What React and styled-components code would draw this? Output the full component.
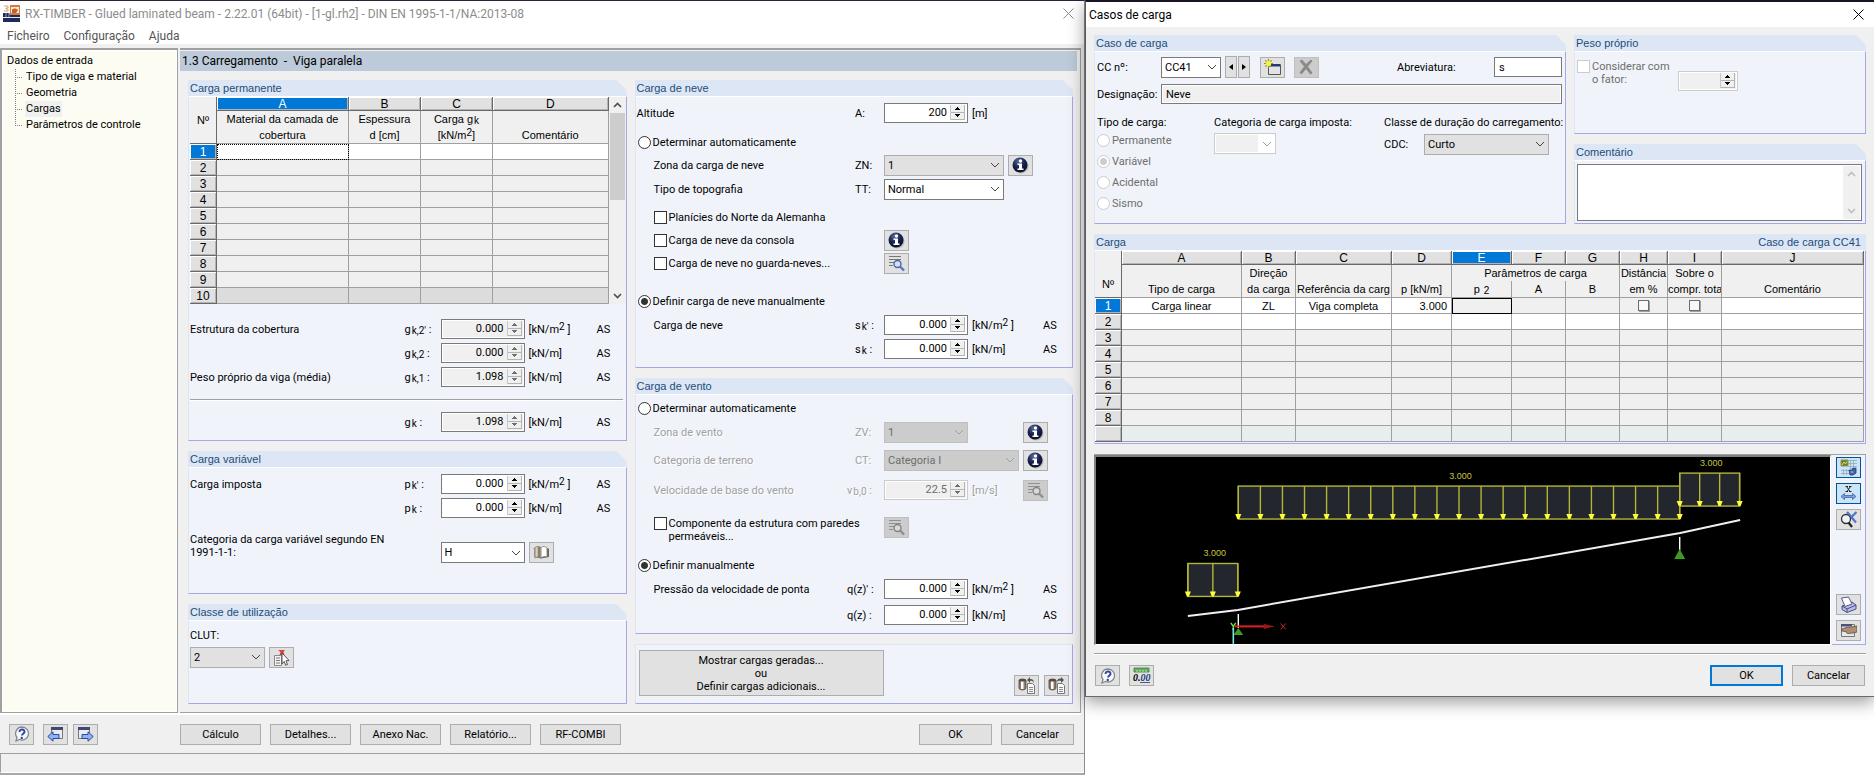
import React from 'react';
import styled, { createGlobalStyle, css } from 'styled-components';

const colors = {
  face: '#f0f0f0',
  button: '#e1e1e1',
  buttonBorder: '#adadad',
  field: '#7a7a7a',
  line: '#a0a0a0',
  group: '#f0f4fa',
  groupHead: '#dce6f4',
  groupEdge: '#a6a6ea',
  groupText: '#1c4d7a',
  accent: '#0078d7',
};

const uiFont = "Roboto, 'Liberation Sans', sans-serif";
const gridFont = "'Liberation Sans', Arial, sans-serif";

const GlobalStyle = createGlobalStyle`
  *, *::before, *::after {
    box-sizing: border-box;
  }
  body {
    margin: 0;
    background: #fff;
    font-family: ${uiFont};
    font-size: 11px;
    line-height: 13px;
    color: #000;
  }
  button, input, select, textarea {
    font: inherit;
    color: inherit;
    margin: 0;
    padding: 0;
    border-radius: 0;
    outline: none;
  }
`;

// LAYOUT
const Desktop = styled.main`
  display: grid;
  grid-template-columns: 1085fr 789fr;
  align-items: start;
  min-height: 100vh;
`;

const MainWindow = styled.section`
  display: flex;
  flex-direction: column;
  min-height: 100vh;
  background: ${colors.face};
  border-top: 1px solid #2c2238;
  border-right: 1px solid #8c8c8c;
  border-bottom: 2px solid #a8a8a8;
`;

const Dialog = styled.section`
  position: relative;
  display: flex;
  flex-direction: column;
  background: ${colors.face};
  border-top: 2px solid #1a1426;
  border-left: 1px solid #5a5a5a;
  border-bottom: 1px solid #6a6a6a;
  box-shadow: 0 5px 16px rgba(0, 0, 0, 0.4);
`;

const TitleBar = styled.header`
  display: flex;
  align-items: center;
  gap: 5px;
  height: 25px;
  padding: 0 10px 0 3px;
  background: #fff;
  color: ${({ $active }) => ($active ? '#000' : '#8c8c8c')};
`;

const Title = styled.h1`
  flex: 1;
  margin: 0;
  font-size: 12px;
  font-weight: 400;
  line-height: 16px;
`;

const CloseButton = styled.button`
  display: flex;
  border: none;
  background: none;
`;

const MenuBar = styled.nav`
  display: flex;
  gap: 14px;
  height: 18px;
  padding-left: 7px;
  background: #fff;
  font-size: 12px;
  line-height: 20px;
`;

const MenuLink = styled.a`
  height: 18px;
  color: #555;
  text-decoration: none;
`;

const Workspace = styled.div`
  flex: 1;
  display: grid;
  grid-template-columns: 178px minmax(0, 1fr);
  gap: 2px;
  margin: 4px 3px 0 0;
  border-bottom: 2px solid #fff;
`;

const TreePane = styled.aside`
  padding: 3px 5px;
  background: #fcfcf2;
  border: 1px solid ${colors.line};
  border-top-width: 2px;
  border-left-width: 2px;
  box-shadow: inset 0 0 0 1px #fff;
`;

const TreeRoot = styled.div`
  line-height: 16px;
`;

const TreeList = styled.ul`
  list-style: none;
  margin: 0 0 0 8px;
  padding: 0;
`;

const TreeItem = styled.li`
  display: flex;
  align-items: center;
  height: 16px;
  background:
    repeating-linear-gradient(180deg, #808080 0 1px, transparent 1px 2px) 0 0 / 1px
      ${({ $last }) => ($last ? '8px' : '16px')} no-repeat,
    repeating-linear-gradient(90deg, #808080 0 1px, transparent 1px 2px) 0 8px / 8px 1px no-repeat;
`;

const TreeLink = styled.a`
  margin-left: 10px;
  padding: 0 1px;
  line-height: 16px;
  color: #000;
  text-decoration: none;
  background: ${({ $current }) => ($current ? colors.face : 'transparent')};
`;

const Content = styled.div`
  display: flex;
  flex-direction: column;
  border-top: 2px solid ${colors.line};
  border-right: 1px solid ${colors.line};
  border-bottom: 1px solid ${colors.line};
`;

const ContentTitle = styled.h2`
  margin: 1px 3px 0 0;
  padding-left: 2px;
  height: 20px;
  background: #bccad9;
  font-size: 12px;
  font-weight: 400;
  line-height: 20px;
  white-space: pre;
`;

const Columns = styled.div`
  flex: 1;
  display: grid;
  grid-template-columns: minmax(0, 1fr) minmax(0, 1fr);
  gap: 8px;
  padding: 9px 7px 8px 8px;
`;

const Column = styled.div`
  display: flex;
  flex-direction: column;
  gap: 10px;
`;

// GROUP BOX
const GroupWrapper = styled.section`
  display: flex;
  flex-direction: column;
  flex: ${({ $grow }) => ($grow ? '1 0 auto' : 'none')};
  min-width: 0;
`;

const GroupHead = styled.h3`
  display: flex;
  justify-content: space-between;
  margin: 0;
  padding: 0 5px 0 2px;
  height: 16px;
  background: ${colors.groupHead};
  color: ${colors.groupText};
  font-family: ${gridFont};
  font-size: 11px;
  font-weight: 400;
  line-height: 16px;
  clip-path: ${({ $square }) =>
    $square ? 'none' : 'polygon(0 0, calc(100% - 10px) 0, 100% 10px, 100% 100%, 0 100%)'};
`;

const GroupBody = styled.div`
  flex: 1;
  padding: ${({ $pad }) => $pad || '0 0 7px 1px'};
  background: ${colors.group};
  border: 1px solid ${colors.groupEdge};
  border-top-color: ${({ $plain }) => ($plain ? colors.groupHead : '#fff')};
  border-left-color: ${colors.groupHead};
`;

const Group = ({ title, aside, square, grow, pad, children }) => (
  <GroupWrapper $grow={grow}>
    {title && (
      <GroupHead $square={square}>
        <span>{title}</span>
        {aside && <span>{aside}</span>}
      </GroupHead>
    )}
    <GroupBody $pad={pad} $plain={!title}>
      {children}
    </GroupBody>
  </GroupWrapper>
);

// FORM PARTS
const Row = styled.div`
  display: grid;
  grid-template-columns: ${({ $wide }) =>
    $wide ? 'minmax(0, 1fr) 37px 84px 75px 29px' : 'minmax(0, 1fr) 36px 84px 72px 29px'};
  align-items: ${({ $align = 'center' }) => $align};
  min-height: ${({ $tall }) => ($tall ? 30 : 22)}px;
  margin-top: ${({ $top = 2 }) => $top}px;
`;

const Line = styled.div`
  display: flex;
  align-items: center;
  gap: ${({ $gap = 0 }) => $gap}px;
  min-height: 22px;
  margin-top: ${({ $top = 2 }) => $top}px;
`;

const disabledText = css`
  color: #a0a0a0;
  text-shadow: 1px 1px #fff;
`;

const Label = styled.label`
  padding-left: ${({ $indent }) => ($indent ? 17 : 0)}px;
  align-self: ${({ $start }) => ($start ? 'start' : 'center')};
  ${({ $off }) => $off && disabledText}
`;

const Symbol = styled.label`
  padding-left: ${({ $shift }) => ($shift ? 8 : 0)}px;
  white-space: nowrap;
  ${({ $off }) => $off && disabledText}
`;

const Sub = styled.span`
  position: relative;
  top: 1px;
  padding-left: 1px;
  font-size: 10px;
  line-height: 0;
`;

const Sup = styled.span`
  position: relative;
  top: -3px;
  font-size: 10px;
  line-height: 0;
`;

const Unit = styled.span`
  padding-left: 4px;
  ${({ $off }) => $off && disabledText}
`;

const FixedUnit = styled(Unit)`
  flex: none;
  width: 55px;
`;

const Separator = styled.hr`
  margin: 11px 3px 10px 0;
  border: none;
  border-top: 1px solid ${colors.line};
  border-bottom: 1px solid #fff;
`;

const SpinWrapper = styled.span`
  display: flex;
  flex: none;
  gap: 3px;
  width: ${({ $width = 84 }) => $width}px;
  height: 20px;
  padding: 1px 2px 2px;
  background: ${({ $look }) => ($look === 'edit' ? '#fff' : colors.face)};
  border: 1px solid ${({ $look }) => ($look === 'off' ? '#cccccc' : colors.field)};
  box-shadow: inset 0 0 0 1px #fff;
  color: ${({ $look }) => ($look === 'off' ? '#6d6d6d' : '#000')};
`;

const SpinInput = styled.input`
  flex: 1;
  min-width: 0;
  border: none;
  background: none;
  text-align: right;
`;

const SpinButtons = styled.span`
  display: grid;
  grid-template-rows: 1fr 1fr;
  width: 15px;
  background: ${colors.face};
  border-right: 1px solid #b4b4b4;
  border-left: 1px solid #c8c8c8;
`;

const SpinButton = styled.button`
  display: flex;
  align-items: center;
  justify-content: center;
  border: none;
  border-bottom: 1px solid #b4b4b4;
  background: ${colors.face};
`;

const Spin = ({ id, value, look = 'edit', width, label }) => {
  const arrow = look === 'read' || (look === 'off' && value) ? '#6d6d6d' : '#000';
  return (
    <SpinWrapper $look={look} $width={width}>
      <SpinInput id={id} defaultValue={value} disabled={look !== 'edit'} aria-label={label} />
      <SpinButtons>
        <SpinButton type='button' aria-label='Aumentar'>
          <svg width='5' height='3' viewBox='0 0 5 3' shapeRendering='crispEdges'>
            <path d='M2 0h1v1h1v1h1v1H0V2h1V1h1z' fill={arrow} />
          </svg>
        </SpinButton>
        <SpinButton type='button' aria-label='Diminuir'>
          <svg width='5' height='3' viewBox='0 0 5 3' shapeRendering='crispEdges'>
            <path d='M0 0h5v1H4v1H3v1H2V2H1V1H0z' fill={arrow} />
          </svg>
        </SpinButton>
      </SpinButtons>
    </SpinWrapper>
  );
};

const selectLooks = {
  edit: css`
    background: #fff;
    border-color: ${colors.field};
  `,
  list: css`
    background: ${colors.button};
    border-color: ${colors.buttonBorder};
  `,
  off: css`
    background: #cccccc;
    border-color: #bfbfbf;
    color: #6d6d6d;
  `,
  empty: css`
    background: linear-gradient(${colors.face}, ${colors.face}) 1px 1px / 42px 17px no-repeat #fff;
    border-color: #cccccc;
  `,
};

const SelectWrapper = styled.span`
  display: grid;
  flex: none;
  grid-template-areas: 'stack';
  align-items: center;
  width: ${({ $width = 84 }) => $width}px;

  > * {
    grid-area: stack;
  }
  svg {
    justify-self: end;
    margin-right: 4px;
    pointer-events: none;
  }
`;

const NativeSelect = styled.select`
  width: 100%;
  height: 21px;
  padding-left: 3px;
  border: 1px solid;
  appearance: none;
  opacity: 1;
  ${({ $look }) => selectLooks[$look]}
`;

const Select = ({ id, value, look = 'edit', width }) => (
  <SelectWrapper $width={width}>
    <NativeSelect id={id} $look={look} disabled={look === 'off' || look === 'empty'}>
      <option>{value}</option>
    </NativeSelect>
    <svg width='10' height='6' viewBox='0 0 10 6'>
      <path
        d='M1 1l4 4 4-4'
        fill='none'
        stroke={look === 'off' || look === 'empty' ? '#a0a0a0' : '#444'}
      />
    </svg>
  </SelectWrapper>
);

const TextInput = styled.input`
  flex: ${({ $width }) => ($width ? 'none' : 1)};
  width: ${({ $width }) => ($width ? `${$width}px` : 'auto')};
  height: 20px;
  padding-left: 4px;
  border: 1px solid ${colors.field};
  background: ${({ readOnly }) => (readOnly ? colors.face : '#fff')};
  box-shadow: inset 0 0 0 1px #fff;
`;

const ChoiceLabel = styled.label`
  display: flex;
  align-items: ${({ $start }) => ($start ? 'flex-start' : 'center')};
  gap: 2px;
  padding-left: 1px;
  color: ${({ $off }) => ($off ? '#6d6d6d' : '#000')};
`;

// spans the label and symbol columns of a row
const OptionLabel = styled(ChoiceLabel)`
  grid-column: span 2;
  padding: 0 16px 0 17px;
`;

const Radio = styled.input.attrs({ type: 'radio' })`
  appearance: none;
  flex: none;
  width: 13px;
  height: 13px;
  border: 1px solid #333;
  border-radius: 50%;
  background: #fff;

  &:checked {
    background: radial-gradient(circle, #333 3px, #fff 4px);
  }
  &:disabled {
    border-color: #cccccc;
  }
  &:disabled:checked {
    background: radial-gradient(circle, #cccccc 3px, #fff 4px);
  }
`;

const Check = styled.input.attrs({ type: 'checkbox' })`
  appearance: none;
  flex: none;
  width: 13px;
  height: 13px;
  border: 1px solid #333;
  background: #fff;

  &:disabled {
    border-color: #cccccc;
  }
`;

const CellCheck = styled.input.attrs({ type: 'checkbox' })`
  appearance: none;
  display: block;
  width: 11px;
  height: 11px;
  margin: 0 auto;
  border: 1px solid #6d6d6d;
  background: #f8f8f8;
  box-shadow: 1px 1px #a0a0a0;
`;

const Button = styled.button`
  width: ${({ $width = 81 }) => $width}px;
  height: 21px;
  border: 1px solid ${colors.buttonBorder};
  background: ${colors.button};

  ${({ $primary }) =>
    $primary &&
    css`
      border: 2px solid ${colors.accent};
    `}
`;

const IconButton = styled.button`
  display: flex;
  flex: none;
  align-items: center;
  justify-content: center;
  width: 25px;
  height: 21px;
  border: 1px solid ${colors.buttonBorder};
  background: ${colors.button};

  ${({ $on }) =>
    $on &&
    css`
      border-color: #005499;
      background: #cce4f7;
    `}
  ${({ disabled }) =>
    disabled &&
    css`
      border-color: #bfbfbf;
      background: #cccccc;
      filter: grayscale(1);

      svg {
        opacity: 0.7;
      }
    `}
`;

const StepButton = styled(IconButton)`
  width: 12px;
  height: 22px;
`;

const GeneratedButton = styled.button`
  width: 245px;
  height: 46px;
  border: 1px solid ${colors.buttonBorder};
  background: ${colors.button};
  white-space: pre-line;
`;

// GRIDS
const Table = styled.table`
  flex: 1;
  width: 100%;
  min-width: 0;
  table-layout: fixed;
  border-collapse: separate;
  border-spacing: 0;
  background: ${colors.face};
  font-family: ${gridFont};
  line-height: 14px;
  white-space: nowrap;

  tr {
    height: 16px;
  }
`;

const LetterRow = styled.tr`
  && {
    height: 14px;
  }
`;

const raised = css`
  padding: 0;
  border-right: 1px solid #696969;
  border-bottom: 1px solid #696969;
  box-shadow: inset 1px 1px #fff, inset -1px -1px #b4b4b4;
  font-size: 12px;
  font-weight: 400;
  text-align: center;
  background: ${({ $on }) => ($on ? colors.accent : colors.button)};
  color: ${({ $on }) => ($on ? '#fff' : '#000')};
`;

const LetterCell = styled.th`
  ${raised}
  line-height: 12px;
`;

const RowCell = styled.th`
  ${raised}
`;

const CornerCell = styled.th`
  padding: ${({ $low }) => ($low ? '19px' : '0')} 0 0;
  font-weight: 400;
  border-right: 1px solid #696969;
  border-bottom: 1px solid #696969;
`;

const HeadCell = styled.th`
  padding: 0;
  overflow: hidden;
  border-right: 1px solid ${colors.line};
  border-bottom: ${({ $span }) => ($span ? '0' : '1px')} solid ${colors.line};
  font-weight: 400;
  line-height: 16px;
  vertical-align: bottom;
  white-space: pre;
`;

const cellFill = {
  edit: '#fff',
  idle: colors.face,
  end: '#dcdcdc',
  tail: '#e8eeee',
};

const Cell = styled.td`
  padding: 0 4px;
  overflow: hidden;
  border-right: 1px solid ${colors.line};
  border-bottom: 1px solid ${colors.line};
  background: ${({ $fill = 'idle' }) => cellFill[$fill]};
  text-align: ${({ $align = 'center' }) => $align};
  outline: ${({ $focus }) => $focus || 'none'};
  outline-offset: -1px;
`;

const GridWithScroll = styled.div`
  display: flex;
`;

const ScrollBar = styled.div`
  display: flex;
  flex-direction: column;
  flex: none;
  width: 17px;
  background: ${colors.face};
`;

const ScrollButton = styled.button`
  display: flex;
  align-items: center;
  justify-content: center;
  height: 16px;
  border: none;
  background: none;
`;

const ScrollTrack = styled.div`
  flex: 1;
`;

const ScrollThumb = styled.div`
  height: 87px;
  margin: 0 1px;
  background: #cdcdcd;
`;

const Scroll = ({ thumb, stroke = '#505050' }) => (
  <ScrollBar>
    <ScrollButton type='button' aria-label='Subir'>
      <svg width='9' height='6' viewBox='0 0 9 6'>
        <path d='M1 5l3.5-3.5L8 5' fill='none' stroke={stroke} strokeWidth='1.7' />
      </svg>
    </ScrollButton>
    <ScrollTrack>{thumb && <ScrollThumb />}</ScrollTrack>
    <ScrollButton type='button' aria-label='Descer'>
      <svg width='9' height='6' viewBox='0 0 9 6'>
        <path d='M1 1l3.5 3.5L8 1' fill='none' stroke={stroke} strokeWidth='1.7' />
      </svg>
    </ScrollButton>
  </ScrollBar>
);

// FOOTERS
const Footer = styled.footer`
  display: flex;
  align-items: center;
  gap: 9px;
  height: 38px;
  padding: 0 10px 0 9px;
`;

const IconPair = styled.div`
  display: flex;
  gap: 5px;
`;

const MainActions = styled.div`
  display: flex;
  flex: 1;
  gap: 9px;
  margin-left: 73px;
`;

const StatusBar = styled.div`
  height: 20px;
  border-top: 1px solid ${colors.line};
  border-left: 1px solid ${colors.line};
  border-bottom: 1px solid #fff;
`;

const DialogFooter = styled.footer`
  display: flex;
  align-items: center;
  gap: 9px;
  height: 43px;
  margin: 8px 8px 0;
  padding: 1px 1px 0;
  border-top: 1px solid ${colors.line};
  box-shadow: inset 0 1px #fff;
`;

const DialogActions = styled.div`
  display: flex;
  flex: 1;
  justify-content: flex-end;
  gap: 9px;
`;

const Generated = styled.div`
  display: flex;
  align-items: flex-end;
  gap: 5px;
`;

const Push = styled.span`
  flex: 1;
`;

// DIALOG PARTS
const DialogBody = styled.div`
  display: flex;
  flex-direction: column;
  gap: 10px;
  padding: 8px 8px 0;
`;

const TopGroups = styled.div`
  display: grid;
  grid-template-columns: minmax(0, 472fr) minmax(0, 292fr);
  gap: 8px;
`;

const FixedLabel = styled.label`
  flex: none;
  width: ${({ $width }) => $width}px;
`;

const StepPair = styled.div`
  display: flex;
  gap: 1px;
  margin: 0 10px 0 4px;
`;

const CaseOptions = styled.div`
  display: grid;
  grid-template-columns: 117px minmax(0, 1fr) 178px;
  margin-top: 11px;
`;

const OptionColumn = styled.fieldset`
  display: flex;
  flex-direction: column;
  align-items: flex-start;
  min-width: 0;
  margin: 0;
  padding: 0;
  border: none;
`;

const Legend = styled.div`
  margin-bottom: 4px;
  white-space: nowrap;
`;

const RadioStack = styled.div`
  display: flex;
  flex-direction: column;
  gap: 8px;
  margin: 1px 0 2px -1px;
`;

const WeightLine = styled.div`
  display: flex;
  align-items: flex-end;
  padding: 8px 0 35px;
`;

const WeightCheck = styled(ChoiceLabel)`
  width: 102px;
  margin-bottom: 5px;
`;

const CommentBox = styled.div`
  display: flex;
  height: 57px;
  margin: 3px 2px 2px 0;
  padding: 1px;
  border: 1px solid ${colors.field};
  background: #fff;
`;

const CommentArea = styled.textarea`
  flex: 1;
  border: none;
  resize: none;
`;

const Viewer = styled.div`
  display: flex;
  border-top: 1px solid ${colors.line};
`;

const Canvas = styled.div`
  flex: 1;
  min-width: 0;
  height: 190px;
  margin-right: 1px;
  border: 2px solid #808080;
  border-right: 1px solid #fff;
  border-bottom: 1px solid #fff;
  background: #000;

  svg {
    display: block;
    width: 100%;
    height: 100%;
  }
`;

const ViewerTools = styled.div`
  display: flex;
  flex-direction: column;
  gap: 5px;
  width: 34px;
  padding: 2px 3px 3px 4px;
  background: ${colors.group};
  border-right: 1px solid ${colors.groupEdge};
  border-bottom: 1px solid ${colors.groupEdge};
`;

// ICONS
const AppIcon = () => (
  <svg width='17' height='17' viewBox='0 0 17 17'>
    <rect x='7' y='0' width='10' height='10' fill='#d9793a' />
    <rect x='8' y='2' width='8' height='6' fill='#fbe9d8' />
    <path d='M9 5c1-2 4-2 6 0l-2 3H9z' fill='#c0602a' />
    <path d='M1 1h4v2H3v1h2v2H1' fill='none' stroke='#e0a060' />
    <path d='M0 17V8h6l1 2h10v7z' fill='#1f2a5c' />
    <path d='M0 12.5h17' stroke='#e7e7ee' />
    <path d='M3 8v4M6 8v4' stroke='#8f9ac0' />
  </svg>
);

const CloseIcon = ({ color }) => (
  <svg width='11' height='11' viewBox='0 0 11 11'>
    <path d='M.5.5l10 10M10.5.5l-10 10' stroke={color} fill='none' />
  </svg>
);

const InfoIcon = () => (
  <svg width='17' height='17' viewBox='0 0 17 17'>
    <defs>
      <radialGradient id='info' cx='.4' cy='.25' r='.8'>
        <stop offset='0' stopColor='#5a6a9c' />
        <stop offset='.5' stopColor='#18234f' />
        <stop offset='1' stopColor='#070d28' />
      </radialGradient>
    </defs>
    <circle cx='9' cy='9' r='7.5' fill='#9a9a9a' opacity='.6' />
    <circle cx='8' cy='8' r='7.5' fill='url(#info)' />
    <circle cx='8.5' cy='4' r='1.7' fill='#fff' />
    <path d='M5.5 6.5H10v5h1.5V13h-6v-1.5H7V8H5.5z' fill='#fff' />
  </svg>
);

const DetailIcon = () => (
  <svg width='17' height='17' viewBox='0 0 17 17'>
    <path d='M1 1.5h12M1 4.5h12M1 7.5h6M1 10.5h4' stroke='#777' />
    <circle cx='9.5' cy='9' r='3.5' fill='#d4e0f8' stroke='#4b68a8' strokeWidth='1.4' />
    <path d='M12 11.5l4 4' stroke='#5676bb' strokeWidth='2.4' />
  </svg>
);

const BookIcon = () => (
  <svg width='17' height='14' viewBox='0 0 17 14'>
    <path d='M0 3l1.5-1v9L8 12.5 16 11V3l-1.5-1' fill='#6a6a6a' />
    <path d='M2 1.5c2-1.500 4-1 6 0V12c-2-1-4-1.500-6 0z' fill='#d9cfbc' stroke='#777' strokeWidth='.8' />
    <path d='M8 2c1-2 4-2 6 0v9c-2-1-4-.5-6 1z' fill='#fff' stroke='#777' strokeWidth='.8' />
    <path d='M6 1v10.5' stroke='#8c7f6a' strokeWidth='2.5' />
  </svg>
);

const PickIcon = () => (
  <svg width='17' height='17' viewBox='0 0 17 17'>
    <path d='M1.5 6.5h7v10h-7z' fill='#f4f4f4' stroke='#888' />
    <path d='M3 9h4M3 11.5h4M3 14h4' stroke='#777' />
    <path d='M5 1h7l-1.5 2 1 3h-5l1-3z' fill='#d8433f' />
    <path d='M9 4l7 7.5-3 .3 1.5 3.7-1.8.7-1.5-3.7L9 15z' fill='#fff' stroke='#444' strokeWidth='.9' />
  </svg>
);

const LibraryIcon = ({ save }) => (
  <svg width='17' height='17' viewBox='0 0 17 17'>
    <path d='M1 3v8c0 2.5 7 2.5 7 0V3' fill='#8a7d70' stroke='#4a4038' strokeWidth='.8' />
    <path d='M3 4h2.5v8H3z' fill='#fff' />
    <ellipse cx='4.5' cy='3' rx='3.5' ry='1.5' fill='#5a4c40' />
    <path d='M9.5 6.5h5l2 2v8h-7z' fill='#fafafa' stroke='#777' />
    <path d='M11 10.5h4M11 12.5h4M11 14.5h4' stroke='#888' />
    <path d={save ? 'M9 5c0-3 2-4 4-3.5V0l3 3-3 3V4c-2-.5-3 0-4 1z' : 'M16 6c0-3-2-4.5-4-4V0L9 3l3 3V4c2-.5 3 0 4 2z'} fill='#555' />
  </svg>
);

const HelpIcon = () => (
  <svg width='17' height='16' viewBox='0 0 17 16'>
    <path d='M9 1a6.5 6.5 0 1 1-2.5 12.5L3 15l1-3.5A6.5 6.5 0 0 1 9 1z' fill='#f6f8fc' stroke='#85888f' strokeWidth='1.3' />
    <path d='M6.5 6c0-3.5 5.5-3 5 0-.2 1.5-2.3 1.5-2.5 3.5' fill='none' stroke='#32479a' strokeWidth='1.9' />
    <circle cx='8.8' cy='12' r='1.2' fill='#32479a' />
  </svg>
);

const PageIcon = ({ next }) => (
  <svg width='17' height='16' viewBox='0 0 17 16'>
    <g transform={next ? 'translate(17 0) scale(-1 1)' : undefined}>
      <path d='M4.5 1.5h11v11h-11z' fill='#e9ebf0' stroke='#777' />
      <path d='M4 1h12v3H4z' fill='#3c4a72' />
      <path d='M.8 10.5L6 5.8v2.7h6v4H6v2.7z' fill='#8fb2f2' stroke='#2b4a9c' />
    </g>
  </svg>
);

const NewIcon = () => (
  <svg width='17' height='17' viewBox='0 0 17 17'>
    <path d='M4.5 5.5h12v10h-12z' fill='#e3e3e3' stroke='#555' />
    <path d='M5 5h11v2.5H5z' fill='#26377a' />
    <path d='M4.5 0v9M0 4.5h9M1.3 1.3l6.4 6.4M7.7 1.3L1.3 7.7' stroke='#8c8a20' strokeWidth='1.2' />
    <circle cx='4.5' cy='4.5' r='2.7' fill='#f6f23a' />
  </svg>
);

const DeleteIcon = () => (
  <svg width='15' height='16' viewBox='0 0 15 16'>
    <path d='M1 2l2-1 4 4.5L12 1l1 1-4.500 5.500L13 14l-1.500 1L7 9.500 2.500 15 1 13.500l4.500-6z' fill='#707070' stroke='#666' strokeWidth='.8' />
  </svg>
);

const StepIcon = ({ next }) => (
  <svg width='4' height='6' viewBox='0 0 4 6'>
    <path d={next ? 'M0 0l4 3-4 3z' : 'M4 0L0 3l4 3z'} fill='#000' />
  </svg>
);

const RenderIcon = () => (
  <svg width='17' height='17' viewBox='0 0 17 17'>
    <path d='M8 1.5h9M8 4.5h9M8 7.5h9M1 11.5h8M1 14.5h8M10.5 1v9M13.5 1v9M3.5 10v6M6.5 10v6' stroke='#8fa9bd' strokeWidth='.8' />
    <path d='M1 1h7v6H1z' fill='#4c8a3a' stroke='#b0854a' />
    <path d='M2 6l2-3 1.5 2L7 2.5' fill='none' stroke='#e5d95a' />
    <path d='M9 11h4l-1-1.500 4-.5v5l-3 2h-3z' fill='#3f62ac' stroke='#22386e' strokeWidth='.8' />
    <path d='M10.5 13h3' stroke='#b8cbf0' />
  </svg>
);

const DimensionIcon = () => (
  <svg width='17' height='17' viewBox='0 0 17 17'>
    <path d='M5.5 1.5H8M9 1.5h2.5M6.5 1.5l3.5 5M10.5 1.5L7 6.5M5.5 6.5H8M9 6.500h2.500' stroke='#222' />
    <path d='M1 11.5l3.5-3v2h8v-2l3.5 3-3.5 3v-2h-8v2z' fill='#7f9fd8' stroke='#36549c' strokeWidth='.7' />
  </svg>
);

const ZoomIcon = () => (
  <svg width='17' height='17' viewBox='0 0 17 17'>
    <path d='M7 1l9 10.5M16.5 1L8 9.5' stroke='#4f74c4' strokeWidth='2.2' />
    <circle cx='6' cy='8' r='4.5' fill='#eef3fa' stroke='#333' strokeWidth='1.3' />
    <path d='M8.5 11.5l3.5 4.5' stroke='#222' strokeWidth='2.2' />
    <path d='M8 2l5 6' stroke='#4f74c4' strokeWidth='1.6' />
  </svg>
);

const PrintIcon = () => (
  <svg width='17' height='17' viewBox='0 0 17 17'>
    <path d='M2 10l10-4 4 3v4l-9 3.500-5-3z' fill='#b9bce6' stroke='#3d427c' strokeWidth='.9' />
    <path d='M1.5 2l7-1L12 8l-7 2.5z' fill='#fff' stroke='#444a80' strokeWidth='.9' />
    <path d='M2 10l5 3 9-4M7 13v3' fill='none' stroke='#3d427c' strokeWidth='.9' />
  </svg>
);

const OptionsIcon = () => (
  <svg width='17' height='15' viewBox='0 0 17 15'>
    <path d='M1.5 1.5h13v12h-13z' fill='#e8e8e8' stroke='#777' />
    <path d='M1 1h11v2.5H1z' fill='#4a5674' />
    <path d='M2 6l4-1.5 5-.5 6-1v6l-4 1-4 .5c-2 .3-3-.5-2-1.500L2 8z' fill='#b08e74' stroke='#5c4434' strokeWidth='.7' />
  </svg>
);

const DecimalsIcon = () => (
  <svg width='19' height='17' viewBox='0 0 19 17'>
    <path d='M2 1h15v4H2z' fill='#63b35a' stroke='#3c7a3a' strokeWidth='.8' />
    <path d='M5 5V3M8 5V3M11 5V3M14 5V3' stroke='#dff2d8' strokeWidth='.8' />
    <text x='1' y='14' fontFamily="'Liberation Serif', serif" fontStyle='italic' fontWeight='700' fontSize='10' fill='#000'>
      0.
      <tspan fill='#243a7c'>00</tspan>
    </text>
    <path d='M8 15.5h10' stroke='#243a7c' strokeWidth='.8' />
  </svg>
);

// LOAD DIAGRAM
const DistributedLoad = ({ x, y, width, parts }) => (
  <g>
    <rect x={x} y={y} width={width} height='33' fill='#24262e' stroke='#b4b436' strokeWidth='1.4' />
    {Array.from({ length: parts + 1 }, (_, i) => {
      const px = x + (width * i) / parts;
      return (
        <g key={i}>
          <path d={`M${px} ${y}v30`} stroke='#b4b436' strokeWidth='1.4' />
          <path d={`M${px - 3} ${y + 28}h6l-2 5h-2z`} fill='#ffff3c' />
        </g>
      );
    })}
  </g>
);

const LoadText = styled.text`
  font-family: ${gridFont};
  font-size: 9px;
  fill: #c8c83c;
  text-anchor: middle;
`;

const LoadDiagram = () => (
  <svg viewBox='0 0 735 187'>
    <DistributedLoad x={92} y={106.5} width={50} parts={2} />
    <DistributedLoad x={142.5} y={29} width={442} parts={20} />
    <DistributedLoad x={584.5} y={16} width={60} parts={3} />
    <LoadText x='119' y='99'>3.000</LoadText>
    <LoadText x='365' y='22'>3.000</LoadText>
    <LoadText x='616' y='9'>3.000</LoadText>
    <path d='M92 159l50-6 443-77 60-13' fill='none' stroke='#f0f0f0' strokeWidth='2' />
    <path d='M142.5 157v14M584.5 80v13' stroke='#fff' strokeWidth='1.4' />
    <path d='M142.5 171l5 7h-10zM584.5 92l5.5 10h-11z' fill='#3f9a24' />
    <path d='M135 166l2.5 3.5L140 166M137.5 169v4' fill='none' stroke='#62e23c' strokeWidth='1.5' />
    <path d='M137.5 171v16' stroke='#7fe8e8' strokeWidth='1.6' />
    <path d='M139 169.5h30' stroke='#e02020' strokeWidth='2' />
    <path d='M168 167l11 2.5-11 2.5z' fill='#9c1616' />
    <path d='M185 166.5l5 6M190 166.5l-5 6' stroke='#d02424' />
  </svg>
);

// FIELD ROW
const kNm2 = (
  <>
    [kN/m<Sup>2</Sup> ]
  </>
);

const LoadRow = ({ id, label, symbol, unit = '[kN/m]', value = '0.000', look, wide, shift, indent, top }) => (
  <Row $wide={wide} $top={top}>
    <Label htmlFor={id} $indent={indent}>{label}</Label>
    <Symbol htmlFor={id} $shift={shift}>{symbol}</Symbol>
    <Spin id={id} value={value} look={look} />
    <Unit>{unit}</Unit>
    <span>AS</span>
  </Row>
);

const LayerGrid = () => (
  <GridWithScroll>
    <Table>
      <colgroup>
        <col width='27' />
        <col width='132' />
        <col width='72' />
        <col width='72' />
        <col />
      </colgroup>
      <thead>
        <LetterRow>
          <CornerCell rowSpan={2}>Nº</CornerCell>
          {['A', 'B', 'C', 'D'].map((letter) => (
            <LetterCell key={letter} $on={letter === 'A'}>{letter}</LetterCell>
          ))}
        </LetterRow>
        <tr>
          <HeadCell>{'Material da camada de\ncobertura'}</HeadCell>
          <HeadCell>{'Espessura\nd [cm]'}</HeadCell>
          <HeadCell>
            Carga g<Sub>k</Sub>
            {'\n'}[kN/m<Sup>2</Sup>]
          </HeadCell>
          <HeadCell>Comentário</HeadCell>
        </tr>
      </thead>
      <tbody>
        {Array.from({ length: 10 }, (_, i) => {
          const fill = i === 0 ? 'edit' : i === 9 ? 'end' : 'idle';
          return (
            <tr key={i}>
              <RowCell $on={i === 0}>{i + 1}</RowCell>
              <Cell $fill={fill} $focus={i === 0 ? '1px dotted #000' : undefined} />
              <Cell $fill={fill} />
              <Cell $fill={fill} />
              <Cell $fill={fill} />
            </tr>
          );
        })}
      </tbody>
    </Table>
    <Scroll thumb />
  </GridWithScroll>
);

const loadColumns = [
  ['A', 120],
  ['B', 54],
  ['C', 96],
  ['D', 60],
  ['E', 60],
  ['F', 54],
  ['G', 54],
  ['H', 48],
  ['I', 54],
  ['J'],
];

const CaseGrid = () => (
  <Table>
    <colgroup>
      <col width='27' />
      {loadColumns.map(([letter, width]) => (
        <col key={letter} width={width} />
      ))}
    </colgroup>
    <thead>
      <LetterRow>
        <CornerCell rowSpan={3} $low>Nº</CornerCell>
        {loadColumns.map(([letter]) => (
          <LetterCell key={letter} $on={letter === 'E'}>{letter}</LetterCell>
        ))}
      </LetterRow>
      <tr>
        <HeadCell rowSpan={2}>Tipo de carga</HeadCell>
        <HeadCell rowSpan={2}>{'Direção\nda carga'}</HeadCell>
        <HeadCell rowSpan={2}>Referência da carg</HeadCell>
        <HeadCell rowSpan={2}>p [kN/m]</HeadCell>
        <HeadCell colSpan={3} $span>Parâmetros de carga</HeadCell>
        <HeadCell rowSpan={2}>{'Distância\nem %'}</HeadCell>
        <HeadCell rowSpan={2}>{'Sobre o\ncompr. tota'}</HeadCell>
        <HeadCell rowSpan={2}>Comentário</HeadCell>
      </tr>
      <tr>
        <HeadCell>p <Sub>2</Sub></HeadCell>
        <HeadCell>A</HeadCell>
        <HeadCell>B</HeadCell>
      </tr>
    </thead>
    <tbody>
      <tr>
        <RowCell $on>1</RowCell>
        <Cell $fill='edit'>Carga linear</Cell>
        <Cell $fill='edit'>ZL</Cell>
        <Cell $fill='edit'>Viga completa</Cell>
        <Cell $fill='edit' $align='right'>3.000</Cell>
        <Cell $focus='1px solid #000' />
        <Cell />
        <Cell />
        <Cell><CellCheck aria-label='Distância em %' /></Cell>
        <Cell><CellCheck aria-label='Sobre o comprimento total' /></Cell>
        <Cell $fill='edit' />
      </tr>
      {[2, 3, 4, 5, 6, 7, 8, ''].map((number) => (
        <tr key={number}>
          <RowCell>{number}</RowCell>
          {loadColumns.map(([letter]) => (
            <Cell key={letter} $fill={number === 2 ? 'edit' : number === '' ? 'tail' : 'idle'} />
          ))}
        </tr>
      ))}
    </tbody>
  </Table>
);

const BeamWindow = () => (
  <MainWindow>
    <TitleBar>
      <AppIcon />
      <Title>RX-TIMBER - Glued laminated beam - 2.22.01 (64bit) - [1-gl.rh2] - DIN EN 1995-1-1/NA:2013-08</Title>
      <CloseButton type='button' aria-label='Fechar'><CloseIcon color='#8a8a8a' /></CloseButton>
    </TitleBar>
    <MenuBar>
      <MenuLink href='#ficheiro'>Ficheiro</MenuLink>
      <MenuLink href='#configuracao'>Configuração</MenuLink>
      <MenuLink href='#ajuda'>Ajuda</MenuLink>
    </MenuBar>
    <Workspace>
      <TreePane>
        <TreeRoot>Dados de entrada</TreeRoot>
        <TreeList>
          <TreeItem><TreeLink href='#viga'>Tipo de viga e material</TreeLink></TreeItem>
          <TreeItem><TreeLink href='#geometria'>Geometria</TreeLink></TreeItem>
          <TreeItem><TreeLink href='#cargas' $current>Cargas</TreeLink></TreeItem>
          <TreeItem $last><TreeLink href='#controle'>Parâmetros de controle</TreeLink></TreeItem>
        </TreeList>
      </TreePane>
      <Content>
        <ContentTitle>{'1.3 Carregamento  -  Viga paralela'}</ContentTitle>
        <Columns>
          <Column>
            <Group title='Carga permanente'>
              <LayerGrid />
              <LoadRow id='gk2a' label='Estrutura da cobertura' symbol={<>g<Sub>k,2'</Sub> :</>} unit={kNm2} look='read' top={14} />
              <LoadRow id='gk2' symbol={<>g<Sub>k,2</Sub> :</>} look='read' />
              <LoadRow id='gk1' label='Peso próprio da viga (média)' symbol={<>g<Sub>k,1</Sub> :</>} value='1.098' look='read' />
              <Separator />
              <LoadRow id='gk' symbol={<>g<Sub>k</Sub> :</>} value='1.098' look='read' top={0} />
            </Group>
            <Group title='Carga variável' pad='3px 0 30px 1px'>
              <LoadRow id='pk1' label='Carga imposta' symbol={<>p<Sub>k'</Sub> :</>} unit={kNm2} />
              <LoadRow id='pk' symbol={<>p<Sub>k</Sub> :</>} />
              <Row $top={14} $tall $align='end'>
                <Label htmlFor='categoria' $start>Categoria da carga variável segundo EN 1991-1-1:</Label>
                <span />
                <Select id='categoria' value='H' />
                <Unit><IconButton type='button' aria-label='Biblioteca'><BookIcon /></IconButton></Unit>
              </Row>
            </Group>
            <Group title='Classe de utilização' grow>
              <Line $top={3}><label htmlFor='clut'>CLUT:</label></Line>
              <Line $top={0} $gap={4}>
                <Select id='clut' value='2' look='list' width={75} />
                <IconButton type='button' aria-label='Selecionar classe'><PickIcon /></IconButton>
              </Line>
            </Group>
          </Column>
          <Column>
            <Group title='Carga de neve'>
              <Row $wide $top={5}>
                <Label htmlFor='altitude'>Altitude</Label>
                <Symbol htmlFor='altitude' $shift>A:</Symbol>
                <Spin id='altitude' value='200' />
                <Unit>[m]</Unit>
              </Row>
              <Line $top={7}>
                <ChoiceLabel><Radio name='neve' />Determinar automaticamente</ChoiceLabel>
              </Line>
              <Row $wide $top={1}>
                <Label htmlFor='zn' $indent>Zona da carga de neve</Label>
                <Symbol htmlFor='zn' $shift>ZN:</Symbol>
                <Line $top={0} $gap={4}>
                  <Select id='zn' value='1' look='list' width={120} />
                  <IconButton type='button' aria-label='Informação'><InfoIcon /></IconButton>
                </Line>
              </Row>
              <Row $wide>
                <Label htmlFor='tt' $indent>Tipo de topografia</Label>
                <Symbol htmlFor='tt' $shift>TT:</Symbol>
                <Select id='tt' value='Normal' width={120} />
              </Row>
              <Row $wide $top={6}>
                <OptionLabel><Check />Planícies do Norte da Alemanha</OptionLabel>
              </Row>
              <Row $wide $top={1}>
                <OptionLabel><Check />Carga de neve da consola</OptionLabel>
                <IconButton type='button' aria-label='Informação'><InfoIcon /></IconButton>
              </Row>
              <Row $wide $top={1}>
                <OptionLabel><Check />Carga de neve no guarda-neves...</OptionLabel>
                <IconButton type='button' aria-label='Detalhes'><DetailIcon /></IconButton>
              </Row>
              <Line $top={16}>
                <ChoiceLabel><Radio name='neve' defaultChecked />Definir carga de neve manualmente</ChoiceLabel>
              </Line>
              <LoadRow id='sk1' label='Carga de neve' symbol={<>s<Sub>k'</Sub> :</>} unit={kNm2} wide shift indent />
              <LoadRow id='sk' symbol={<>s<Sub>k</Sub> :</>} wide shift />
            </Group>
            <Group title='Carga de vento'>
              <Line>
                <ChoiceLabel><Radio name='vento' />Determinar automaticamente</ChoiceLabel>
              </Line>
              <Row $wide>
                <Label htmlFor='zv' $indent $off>Zona de vento</Label>
                <Symbol htmlFor='zv' $shift $off>ZV:</Symbol>
                <Line $top={0} $gap={55}>
                  <Select id='zv' value='1' look='off' />
                  <IconButton type='button' aria-label='Informação'><InfoIcon /></IconButton>
                </Line>
              </Row>
              <Row $wide $top={6}>
                <Label htmlFor='ct' $indent $off>Categoria de terreno</Label>
                <Symbol htmlFor='ct' $shift $off>CT:</Symbol>
                <Line $top={0} $gap={4}>
                  <Select id='ct' value='Categoria I' look='off' width={135} />
                  <IconButton type='button' aria-label='Informação'><InfoIcon /></IconButton>
                </Line>
              </Row>
              <Row $wide $top={8}>
                <Label htmlFor='vb' $indent $off>Velocidade de base do vento</Label>
                <Symbol htmlFor='vb' $off>v<Sub>b,0</Sub> :</Symbol>
                <Line $top={0}>
                  <Spin id='vb' value='22.5' look='off' />
                  <FixedUnit $off>[m/s]</FixedUnit>
                  <IconButton type='button' disabled aria-label='Detalhes'><DetailIcon /></IconButton>
                </Line>
              </Row>
              <Row $wide $top={16} $align='start'>
                <OptionLabel $start><Check />Componente da estrutura com paredes permeáveis...</OptionLabel>
                <IconButton type='button' disabled aria-label='Detalhes'><DetailIcon /></IconButton>
              </Row>
              <Line $top={11}>
                <ChoiceLabel><Radio name='vento' defaultChecked />Definir manualmente</ChoiceLabel>
              </Line>
              <LoadRow id='qz1' label='Pressão da velocidade de ponta' symbol="q(z)' :" unit={kNm2} wide indent />
              <LoadRow id='qz' symbol='q(z) :' wide top={4} />
            </Group>
            <Group grow pad='5px 3px 3px 3px'>
              <Generated>
                <GeneratedButton type='button'>{'Mostrar cargas geradas...\nou\nDefinir cargas adicionais...'}</GeneratedButton>
                <Push />
                <IconButton type='button' aria-label='Carregar'><LibraryIcon /></IconButton>
                <IconButton type='button' aria-label='Guardar'><LibraryIcon save /></IconButton>
              </Generated>
            </Group>
          </Column>
        </Columns>
      </Content>
    </Workspace>
    <Footer>
      <IconButton type='button' aria-label='Ajuda'><HelpIcon /></IconButton>
      <IconPair>
        <IconButton type='button' aria-label='Anterior'><PageIcon /></IconButton>
        <IconButton type='button' aria-label='Seguinte'><PageIcon next /></IconButton>
      </IconPair>
      <MainActions>
        {['Cálculo', 'Detalhes...', 'Anexo Nac.', 'Relatório...', 'RF-COMBI'].map((name) => (
          <Button key={name} type='button'>{name}</Button>
        ))}
      </MainActions>
      <Button type='button' $width={73}>OK</Button>
      <Button type='button' $width={73}>Cancelar</Button>
    </Footer>
    <StatusBar />
  </MainWindow>
);

const LoadCaseDialog = () => (
  <Dialog>
    <TitleBar $active>
      <Title>Casos de carga</Title>
      <CloseButton type='button' aria-label='Fechar'><CloseIcon color='#000' /></CloseButton>
    </TitleBar>
    <DialogBody>
      <TopGroups>
        <Group title='Caso de carga' pad='0 3px 8px 2px'>
          <Line $top={4}>
            <FixedLabel htmlFor='cc' $width={64}>CC nº:</FixedLabel>
            <Select id='cc' value='CC41' width={60} />
            <StepPair>
              <StepButton type='button' aria-label='Caso anterior'><StepIcon /></StepButton>
              <StepButton type='button' aria-label='Caso seguinte'><StepIcon next /></StepButton>
            </StepPair>
            <Line $top={0} $gap={9}>
              <IconButton type='button' aria-label='Novo'><NewIcon /></IconButton>
              <IconButton type='button' disabled aria-label='Eliminar'><DeleteIcon /></IconButton>
            </Line>
            <Push />
            <FixedLabel htmlFor='abreviatura' $width={97}>Abreviatura:</FixedLabel>
            <TextInput id='abreviatura' defaultValue='s' $width={68} />
          </Line>
          <Line $top={5}>
            <FixedLabel htmlFor='designacao' $width={64}>Designação:</FixedLabel>
            <TextInput id='designacao' defaultValue='Neve' readOnly />
          </Line>
          <CaseOptions>
            <OptionColumn>
              <Legend>Tipo de carga:</Legend>
              <RadioStack>
                {['Permanente', 'Variável', 'Acidental', 'Sismo'].map((kind) => (
                  <ChoiceLabel key={kind} $off>
                    <Radio name='tipo' disabled defaultChecked={kind === 'Variável'} />
                    {kind}
                  </ChoiceLabel>
                ))}
              </RadioStack>
            </OptionColumn>
            <OptionColumn>
              <Legend as='label' htmlFor='imposta'>Categoria de carga imposta:</Legend>
              <Select id='imposta' value='' look='empty' width={62} />
            </OptionColumn>
            <OptionColumn>
              <Legend>Classe de duração do carregamento:</Legend>
              <Line $top={0}>
                <FixedLabel htmlFor='cdc' $width={40}>CDC:</FixedLabel>
                <Select id='cdc' value='Curto' look='list' width={125} />
              </Line>
            </OptionColumn>
          </CaseOptions>
        </Group>
        <Column>
          <Group title='Peso próprio'>
            <WeightLine>
              <WeightCheck $off $start><Check disabled />Considerar com o fator:</WeightCheck>
              <Spin value='' look='off' width={60} label='Fator' />
            </WeightLine>
          </Group>
          <Group title='Comentário' grow pad='0 1px 0 2px'>
            <CommentBox>
              <CommentArea aria-label='Comentário' />
              <Scroll stroke='#bfbfbf' />
            </CommentBox>
          </Group>
        </Column>
      </TopGroups>
      <Group title='Carga' aside='Caso de carga CC41' square pad='0 1px 1px 0'>
        <CaseGrid />
      </Group>
      <Viewer>
        <Canvas><LoadDiagram /></Canvas>
        <ViewerTools>
          <IconButton type='button' $on aria-label='Visualização'><RenderIcon /></IconButton>
          <IconButton type='button' $on aria-label='Cotas'><DimensionIcon /></IconButton>
          <IconButton type='button' aria-label='Zoom'><ZoomIcon /></IconButton>
          <Push />
          <IconButton type='button' aria-label='Imprimir'><PrintIcon /></IconButton>
          <IconButton type='button' aria-label='Opções'><OptionsIcon /></IconButton>
        </ViewerTools>
      </Viewer>
    </DialogBody>
    <DialogFooter>
      <IconButton type='button' aria-label='Ajuda'><HelpIcon /></IconButton>
      <IconButton type='button' aria-label='Casas decimais'><DecimalsIcon /></IconButton>
      <DialogActions>
        <Button type='button' $width={73} $primary>OK</Button>
        <Button type='button' $width={73}>Cancelar</Button>
      </DialogActions>
    </DialogFooter>
  </Dialog>
);

const App = () => (
  <Desktop>
    <GlobalStyle />
    <BeamWindow />
    <LoadCaseDialog />
  </Desktop>
);

export default App;
